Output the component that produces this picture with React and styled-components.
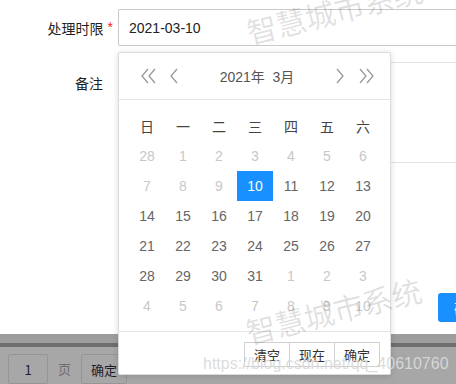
import React from "react";
import styled, { createGlobalStyle } from "styled-components";

const GlobalStyle = createGlobalStyle`
  html, body {
    margin: 0;
    padding: 0;
    background: #fff;
    overflow: hidden;
  }
  body {
    font-family: "Liberation Sans", "Noto Sans CJK SC", sans-serif;
    font-size: 14px;
    color: #333;
  }
`;

const StyledPage = styled.div`
  position: relative;
  width: 456px;
  height: 384px;
  overflow: hidden;
  display: flex;
  flex-direction: column;
`;

const StyledForm = styled.div`
  height: 334px;
  flex-shrink: 0;
  background: #fff;
  padding-top: 9px;
  box-sizing: border-box;
  display: flex;
  flex-direction: column;
`;

const StyledRow = styled.div`
  display: flex;
  align-items: flex-start;
  margin-top: ${(p) => p.gap || 0}px;
`;

const StyledLabel = styled.label`
  width: 118px;
  flex-shrink: 0;
  box-sizing: border-box;
  display: flex;
  justify-content: flex-end;
  align-items: center;
  height: ${(p) => p.h}px;
  padding-right: ${(p) => (p.required ? 5 : 15)}px;
  font-family: "Noto Sans CJK SC", sans-serif;
  font-size: 14px;
  color: #1f1f1f;
`;

const StyledStar = styled.span`
  color: #f5222d;
  margin-left: 4px;
  font-family: "Liberation Sans", sans-serif;
  font-size: 14px;
  position: relative;
  top: -1px;
`;

const StyledInput = styled.div`
  flex: 1;
  height: 37px;
  box-sizing: border-box;
  border: 1px solid #c9c9c9;
  border-right: none;
  border-radius: 2px 0 0 2px;
  padding-left: 10px;
  display: flex;
  align-items: center;
  font-size: 14px;
  color: #222;
`;

const StyledTextarea = styled.div`
  flex: 1;
  height: 101px;
  box-sizing: border-box;
  border: 1px solid #e2e2e2;
  border-right: none;
`;

const StyledActions = styled.div`
  display: flex;
  justify-content: flex-end;
  margin-top: 130px;
`;

const StyledPrimary = styled.div`
  width: 60px;
  margin-right: -42px;
  height: 29px;
  background: #1890ff;
  border-radius: 3px;
  color: #fff;
  font-family: "Noto Sans CJK SC", sans-serif;
  font-size: 14px;
  display: flex;
  align-items: center;
  padding-left: 16px;
  box-sizing: border-box;
`;

const StyledMaskTop = styled.div`
  height: 12px;
  background: #9d9d9d;
`;

const StyledMaskBand = styled.div`
  height: 6px;
  background: #6e6e6e;
`;

const StyledPager = styled.div`
  flex: 1;
  background: #a7a7a7;
  display: flex;
  align-items: flex-start;
  padding: 7px 0 0 8px;
`;

const StyledPagerBox = styled.div`
  width: ${(p) => p.w}px;
  height: 30px;
  box-sizing: border-box;
  border: 1px solid #959595;
  border-radius: 2px;
  display: flex;
  align-items: center;
  justify-content: center;
  font-family: "Noto Sans CJK SC", sans-serif;
  font-size: 13px;
  color: #1d1d2a;
`;

const StyledPagerText = styled.span`
  width: 33px;
  text-align: center;
  line-height: 30px;
  font-family: "Noto Sans CJK SC", sans-serif;
  font-size: 13px;
  color: #6f6f6f;
`;

const StyledPopup = styled.div`
  position: absolute;
  left: 118px;
  top: 52px;
  width: 273px;
  height: 323px;
  box-sizing: border-box;
  background: #fff;
  border: 1px solid #dcdcdc;
  border-radius: 2px;
  box-shadow: 0 1px 6px rgba(0, 0, 0, 0.15);
  display: flex;
  flex-direction: column;
`;

const StyledHeader = styled.div`
  height: 46px;
  flex-shrink: 0;
  border-bottom: 1px solid #e5e5e5;
  display: flex;
  align-items: center;
  padding: 0 10px 0 19px;
`;

const StyledNav = styled.span`
  display: flex;
  align-items: center;
  justify-content: center;
  width: ${(p) => p.w}px;
  color: #9a9a9a;
`;

const StyledTitle = styled.span`
  flex: 1;
  text-align: center;
  font-size: 14px;
  color: #555;
  font-family: "Liberation Sans", "Noto Sans CJK SC", sans-serif;
  white-space: pre;
`;

const StyledGrid = styled.div`
  display: grid;
  grid-template-columns: repeat(7, 36px);
  grid-auto-rows: 30px;
  padding: 11px 10px 10px 10px;
  flex: 1;
`;

const StyledWeek = styled.div`
  display: flex;
  align-items: center;
  justify-content: center;
  font-family: "Noto Sans CJK SC", sans-serif;
  font-size: 14px;
  color: #444;
`;

const StyledDay = styled.div`
  display: flex;
  align-items: center;
  justify-content: center;
  font-size: 14px;
  color: ${(p) => (p.selected ? "#fff" : p.muted ? "#c8c8c8" : "#666")};
  background: ${(p) => (p.selected ? "#1890ff" : "transparent")};
`;

const StyledFooter = styled.div`
  height: 46px;
  flex-shrink: 0;
  border-top: 1px solid #e5e5e5;
  display: flex;
  justify-content: flex-end;
  align-items: flex-start;
  padding: 10px 10px 0 0;
  box-sizing: border-box;
`;

const StyledFootBtn = styled.div`
  width: 46px;
  height: 25px;
  box-sizing: border-box;
  border: 1px solid #cfcfcf;
  margin-left: -1px;
  display: flex;
  align-items: center;
  justify-content: center;
  font-family: "Noto Sans CJK SC", sans-serif;
  font-size: 13px;
  color: #333;
  background: #fff;
`;

const StyledWatermark = styled.div`
  position: absolute;
  left: ${(p) => p.x}px;
  top: ${(p) => p.y}px;
  transform: rotate(-14deg);
  transform-origin: left center;
  font-family: "Noto Sans CJK SC", sans-serif;
  font-size: 30px;
  line-height: 32px;
  color: rgba(0, 0, 0, 0.12);
  white-space: nowrap;
  pointer-events: none;
`;

const StyledCsdn = styled.div`
  position: absolute;
  left: 203px;
  top: 355px;
  font-family: "Liberation Sans", sans-serif;
  font-size: 16px;
  color: rgba(218, 218, 218, 0.95);
  white-space: nowrap;
  pointer-events: none;
`;

const Chevron = ({ dir = "left", double = false }) => {
  const single = (ox) =>
    dir === "left"
      ? `M${ox + 7} 1 L${ox + 1} 8 L${ox + 7} 15`
      : `M${ox + 1} 1 L${ox + 7} 8 L${ox + 1} 15`;
  return (
    <svg width={double ? 16 : 9} height="16" viewBox={`0 0 ${double ? 16 : 9} 16`}>
      <path d={single(0)} fill="none" stroke="currentColor" strokeWidth="1.3" />
      {double && <path d={single(7)} fill="none" stroke="currentColor" strokeWidth="1.3" />}
    </svg>
  );
};

const weeks = ["日", "一", "二", "三", "四", "五", "六"];

const buildDays = () => {
  const days = [{ d: 28, muted: true }];
  for (let i = 1; i <= 9; i++) days.push({ d: i, muted: true });
  for (let i = 10; i <= 31; i++) days.push({ d: i });
  for (let i = 1; i <= 10; i++) days.push({ d: i, muted: true });
  return days;
};

const DatePanel = () => (
  <StyledPopup>
    <StyledHeader>
      <StyledNav w={22}>
        <Chevron dir="left" double />
      </StyledNav>
      <StyledNav w={28}>
        <Chevron dir="left" />
      </StyledNav>
      <StyledTitle>{"2021年  3月"}</StyledTitle>
      <StyledNav w={28}>
        <Chevron dir="right" />
      </StyledNav>
      <StyledNav w={26}>
        <Chevron dir="right" double />
      </StyledNav>
    </StyledHeader>
    <StyledGrid>
      {weeks.map((w) => (
        <StyledWeek key={w}>{w}</StyledWeek>
      ))}
      {buildDays().map((day, i) => (
        <StyledDay key={i} muted={day.muted} selected={!day.muted && day.d === 10}>
          {day.d}
        </StyledDay>
      ))}
    </StyledGrid>
    <StyledFooter>
      <StyledFootBtn>清空</StyledFootBtn>
      <StyledFootBtn>现在</StyledFootBtn>
      <StyledFootBtn>确定</StyledFootBtn>
    </StyledFooter>
  </StyledPopup>
);

export default function App() {
  return (
    <StyledPage>
      <GlobalStyle />
      <StyledForm>
        <StyledRow>
          <StyledLabel h={37} required>
            处理时限<StyledStar>*</StyledStar>
          </StyledLabel>
          <StyledInput>2021-03-10</StyledInput>
        </StyledRow>
        <StyledRow gap={16}>
          <StyledLabel h={42}>备注</StyledLabel>
          <StyledTextarea />
        </StyledRow>
        <StyledActions>
          <StyledPrimary>确定</StyledPrimary>
        </StyledActions>
      </StyledForm>
      <StyledMaskTop />
      <StyledMaskBand />
      <StyledPager>
        <StyledPagerBox w={40}>1</StyledPagerBox>
        <StyledPagerText>页</StyledPagerText>
        <StyledPagerBox w={46}>确定</StyledPagerBox>
      </StyledPager>
      <DatePanel />
      <StyledWatermark x={247} y={16}>智慧城市系统</StyledWatermark>
      <StyledWatermark x={246} y={316}>智慧城市系统</StyledWatermark>
      <StyledCsdn>https://blog.csdn.net/qq_40610760</StyledCsdn>
    </StyledPage>
  );
}
